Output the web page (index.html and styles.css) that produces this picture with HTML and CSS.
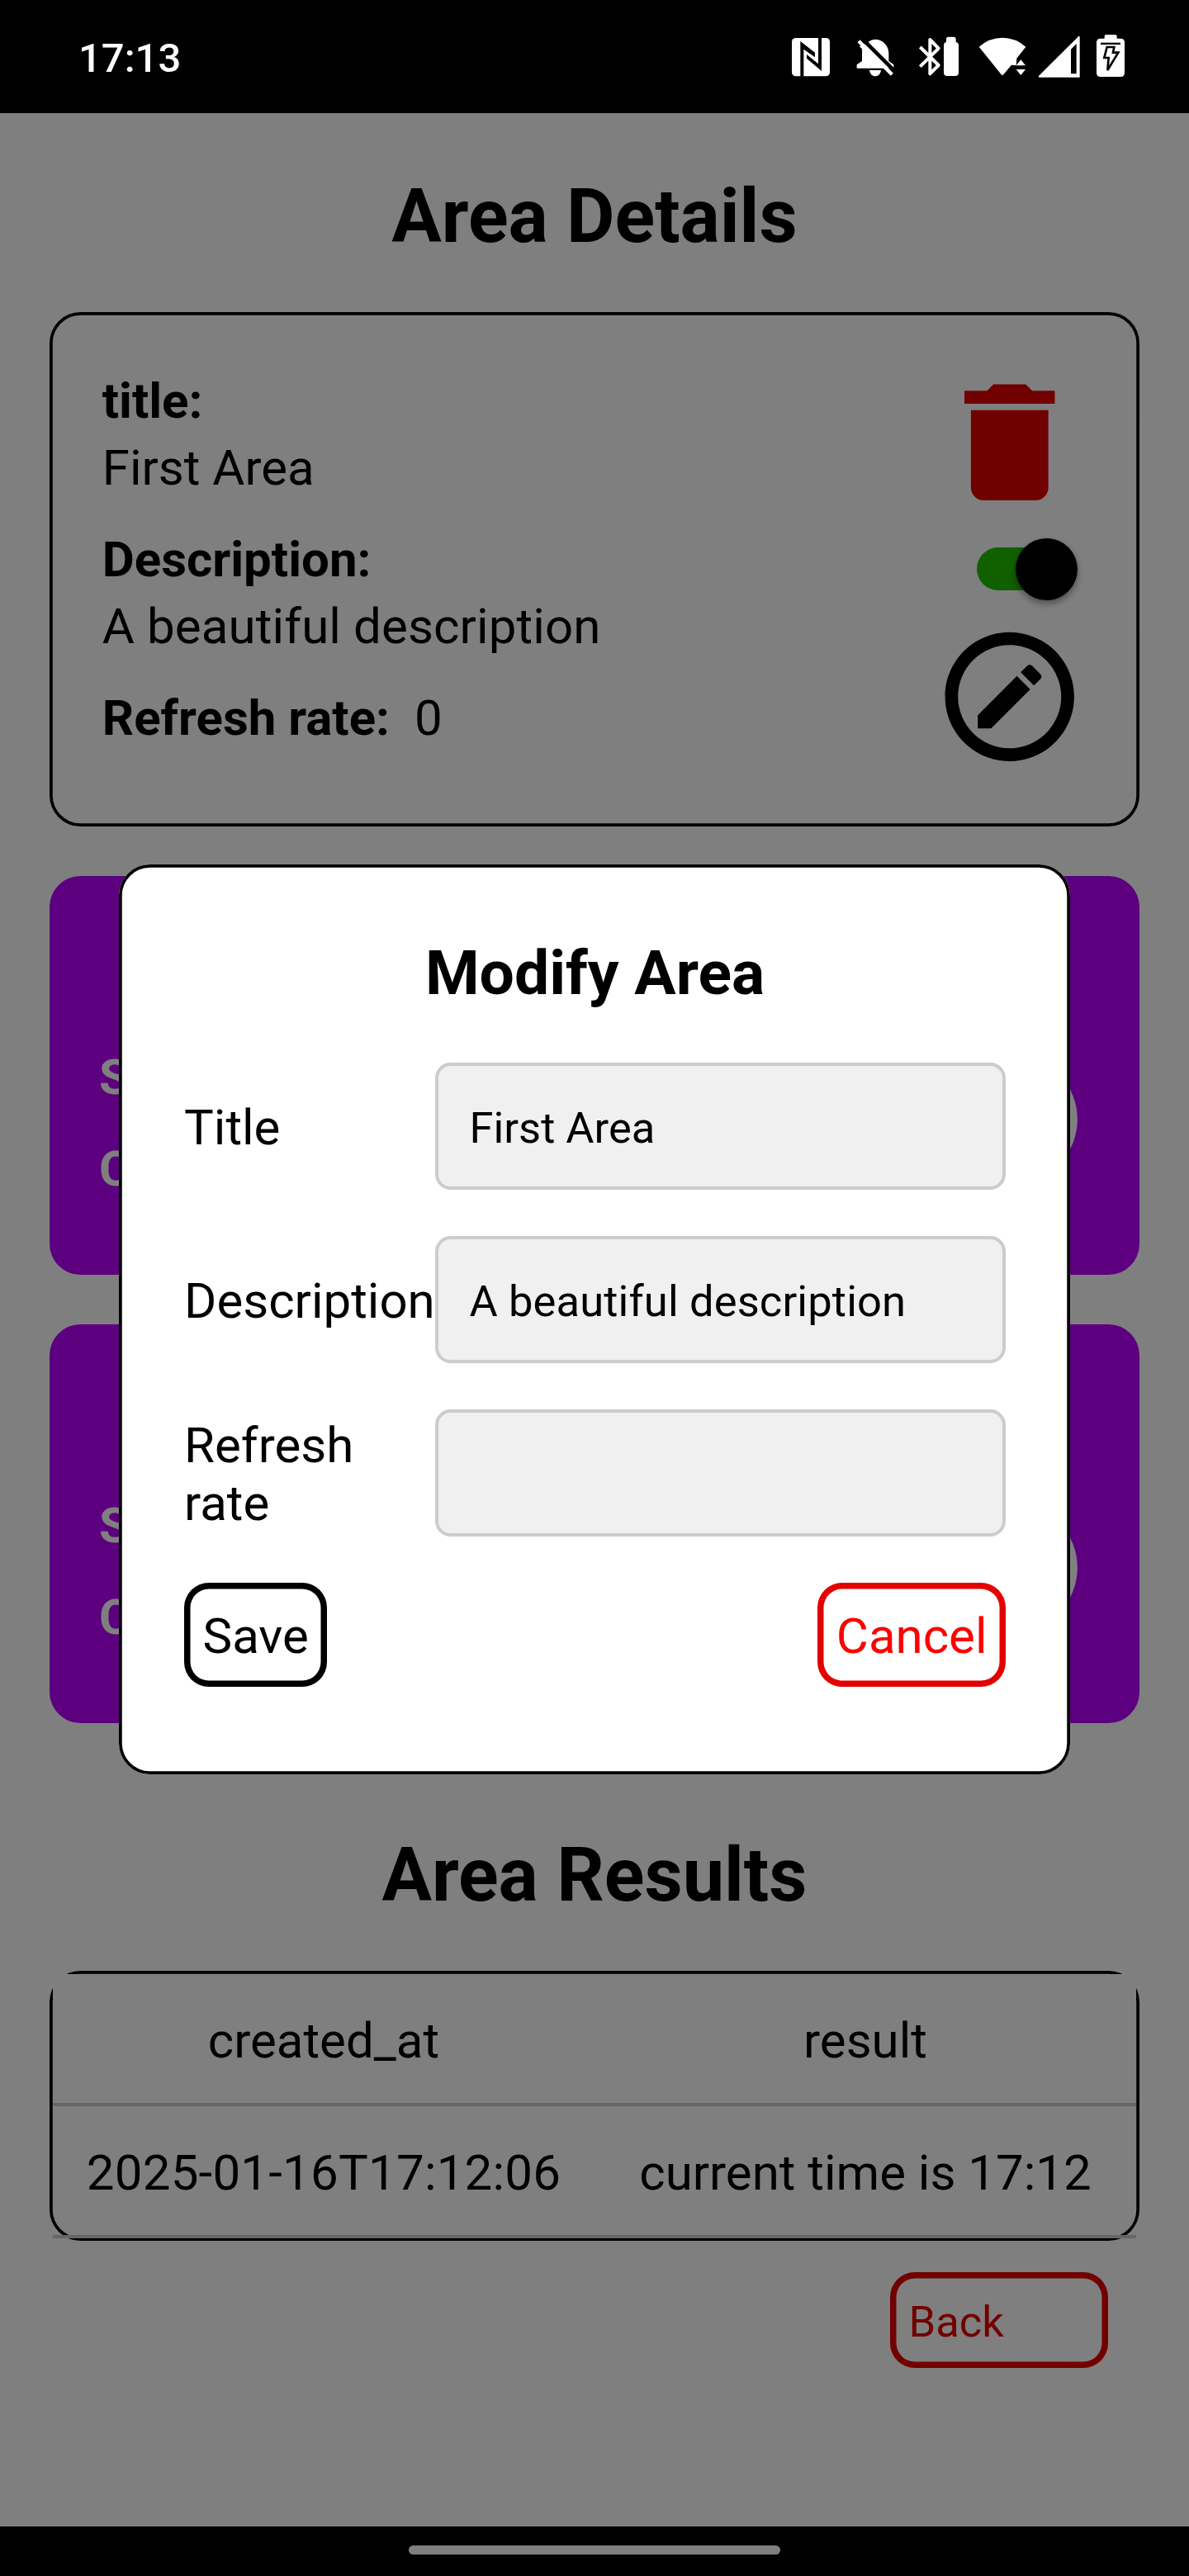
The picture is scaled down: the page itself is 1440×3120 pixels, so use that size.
FILE: index.html
```html
<!DOCTYPE html>
<html lang="en">
<head>
<meta charset="utf-8">
<title>Area Details</title>
<link rel="stylesheet" href="styles.css">
</head>
<body>
<div class="screen">
  <header class="status-bar">
    <span class="clock">17:13</span>
    <svg class="status-icons" viewBox="0 0 1440 300" fill="#fff">
      <!-- NFC -->
      <rect x="117" y="78" width="138" height="139" rx="14"/>
      <path d="M148 90L201 131V148L160 119V218H148ZM225 77V198L171 152V138L213 172V77Z" fill="#000"/>
      <!-- bell off -->
      <path d="M390 97C400 87 411 83 420 83C449 83 469 107 469 134V162L487 175V188H353V175L372 162V118L362 108Z"/>
      <path d="M399 195H441C439 209 431 217 420 217C409 217 401 209 399 195Z"/>
      <path d="M371 79L492 200" stroke="#000" stroke-width="14"/>
      <path d="M360 89L481 211" stroke="#fff" stroke-width="13"/>
      <!-- bluetooth with battery -->
      <path d="M583 111L650 177L619 208V84L650 116L583 182" fill="none" stroke="#fff" stroke-width="12" stroke-linejoin="round"/>
      <path d="M678 92V82Q678 74 686 74H705Q713 74 713 82V92Q723 95 723 104V204Q723 216 711 216H681Q669 216 669 204V104Q669 95 678 92Z"/>
      <!-- wifi -->
      <path d="M797 110Q835 77 882 77Q929 77 967 110L934 152L932 178L915 176L886 211Q882 216 878 211Z"/>
      <path d="M932 178L949 157L966 178ZM932 192H966L949 213Z"/>
      <!-- signal -->
      <path d="M1014 216L1158 73Q1163 69 1163 76V221H1018Q1012 221 1014 216Z"/>
      <path d="M1131 119L1151 99V208H1131Z" fill="#000"/>
      <!-- battery saver -->
      <path d="M1253 80V72Q1253 66 1259 66H1292Q1298 66 1298 72V80H1312Q1326 80 1326 94V205Q1326 219 1312 219H1238Q1224 219 1224 205V94Q1224 80 1238 80Z"/>
      <path d="M1239 95H1311V102H1239Z" fill="#000"/>
      <path d="M1262 111H1288L1284 131H1303L1264 195L1268 150H1252Z" fill="#fff" stroke="#000" stroke-width="8"/>
    </svg>
  </header>

  <main class="page">
    <h1 class="heading heading-details">Area Details</h1>
    <section class="details">
      <div class="details-text">
        <div class="field"><b>title:</b><span>First Area</span></div>
        <div class="field"><b>Description:</b><span class="description">A beautiful description</span></div>
        <div class="field field-inline"><b>Refresh rate:</b><span>0</span></div>
      </div>
      <div class="details-actions">
        <svg class="icon" viewBox="0 0 24 24" fill="#e30000"><path d="M6 19c0 1.1.9 2 2 2h8c1.1 0 2-.9 2-2V7H6v12zM19 4h-3.5l-1-1h-5l-1 1H5v2h14V4z"/></svg>
        <div class="switch"><div class="track"></div><div class="thumb"></div></div>
        <svg class="icon" viewBox="0 0 24 24"><path d="M12,2C6.47,2 2,6.47 2,12C2,17.53 6.47,22 12,22C17.53,22 22,17.53 22,12C22,6.47 17.53,2 12,2M12,4C16.41,4 20,7.59 20,12C20,16.41 16.41,20 12,20C7.59,20 4,16.41 4,12C4,7.59 7.59,4 12,4M15.1,7.07C15.24,7.07 15.38,7.12 15.5,7.23L16.77,8.5C17,8.72 17,9.07 16.77,9.28L15.77,10.28L13.72,8.23L14.72,7.23C14.82,7.12 14.96,7.07 15.1,7.07M13.13,8.81L15.19,10.87L9.13,16.93H7.07V14.87L13.13,8.81Z"/></svg>
      </div>
    </section>

    <section class="service">
      <div class="service-text"><span>S</span><span>C</span></div>
      <svg class="icon service-icon" viewBox="0 0 24 24"><circle cx="12" cy="12" r="9" fill="none" stroke="#fff" stroke-width="2"/></svg>
    </section>
    <section class="service">
      <div class="service-text"><span>S</span><span>C</span></div>
      <svg class="icon service-icon" viewBox="0 0 24 24"><circle cx="12" cy="12" r="9" fill="none" stroke="#fff" stroke-width="2"/></svg>
    </section>

    <h2 class="heading heading-results">Area Results</h2>
    <section class="results">
      <div class="row row-head"><span>created_at</span><span>result</span></div>
      <div class="row"><span class="timestamp">2025-01-16T17:12:06</span><span>current time is 17:12</span></div>
    </section>
    <div class="back">Back</div>
  </main>

  <footer class="nav-bar"><div class="pill"></div></footer>

  <div class="overlay">
    <div class="modal">
      <h2 class="modal-title">Modify Area</h2>
      <div class="form-row"><label>Title</label><div class="input">First Area</div></div>
      <div class="form-row"><label>Description</label><div class="input description">A beautiful description</div></div>
      <div class="form-row"><label>Refresh rate</label><div class="input"></div></div>
      <div class="buttons">
        <div class="button save">Save</div>
        <div class="button cancel">Cancel</div>
      </div>
    </div>
  </div>
</div>
</body>
</html>
```
FILE: styles.css
```css
* { box-sizing: border-box; }

body {
  margin: 0;
  font-family: Roboto, sans-serif;
  font-size: 60px;
  color: #000;
}

.screen {
  position: relative;
  display: flex;
  flex-direction: column;
  width: 1440px;
  height: 3120px;
  background: #fff;
  overflow: hidden;
}

.status-bar {
  display: flex;
  justify-content: space-between;
  height: 137px;
  padding: 0 40px 0 95px;
  background: #000;
}

.clock {
  font-size: 49px;
  font-weight: 500;
  line-height: 141px;
  color: #fff;
}

.status-icons {
  width: 480px;
  height: 100px;
  margin-top: 20px;
}

.page {
  flex: 1;
  display: flex;
  flex-direction: column;
  padding: 0 60px;
}

.heading {
  margin: 0;
  font-size: 90px;
  font-weight: 700;
  text-align: center;
}

.heading-details { padding-top: 10px; line-height: 231px; }
.heading-results { padding-top: 70px; line-height: 230px; }

.description { letter-spacing: 0.12px; }
.timestamp { letter-spacing: 0.22px; }

.details {
  display: flex;
  justify-content: space-between;
  height: 623px;
  padding: 63.5px 63.5px 0 63.75px;
  border-radius: 37.5px;
  box-shadow: inset 0 0 0 3.75px #000;
}

.details-text {
  display: flex;
  flex-direction: column;
  gap: 30px;
  padding-top: 3.5px;
  line-height: 81px;
}

.field { display: flex; flex-direction: column; }
.field-inline { flex-direction: row; gap: 30px; }

.details-actions {
  display: flex;
  flex-direction: column;
  gap: 23px;
}

.icon { display: block; width: 187.5px; height: 187.5px; }

.switch {
  display: flex;
  align-items: center;
  height: 75px;
  padding-left: 54px;
}

.track {
  width: 100px;
  height: 52px;
  margin: -1px -53px 0 0;
  border-radius: 26px;
  background: #20c000;
}

.thumb {
  width: 75px;
  height: 75px;
  border-radius: 50%;
  background: #000;
  box-shadow: 0 4px 8px rgba(0, 0, 0, 0.4);
}

.service {
  display: flex;
  justify-content: space-between;
  height: 483px;
  margin-top: 60px;
  padding: 188px 60px 0;
  border-radius: 37.5px;
  background: #b800ff;
}

.service-text {
  display: flex;
  flex-direction: column;
  font-weight: 700;
  line-height: 111px;
  color: #fff;
}

.service-icon { margin-top: 12.5px; }

.results {
  height: 327px;
  padding: 4px 4px 3px;
  border-radius: 37.5px;
  box-shadow: inset 0 0 0 3.75px #000;
}

.row {
  display: flex;
  height: 160px;
  border-bottom: 4px solid #ccc;
  line-height: 161px;
}

.row span { flex: 1; text-align: center; white-space: nowrap; }
.row-head { background: #fff; }

.back {
  width: 264px;
  height: 116px;
  margin: 38px 38px 0 auto;
  padding-left: 22.5px;
  border-radius: 30px;
  box-shadow: inset 0 0 0 7.5px #e60000;
  font-size: 52.5px;
  line-height: 120px;
  color: #e60000;
}

.nav-bar {
  display: flex;
  justify-content: center;
  height: 60px;
  padding-top: 23px;
  background: #000;
}

.pill {
  width: 450px;
  height: 11px;
  border-radius: 5.5px;
  background: #fff;
}

/* Dimming layer that holds the dialog */
.overlay {
  position: absolute;
  inset: 137px 0 0;
  display: flex;
  justify-content: center;
  padding: 910px 144px 0;
  background: rgba(0, 0, 0, 0.5);
}

.modal {
  width: 1152px;
  height: 1102px;
  padding: 78.75px 78px 0 79px;
  border-radius: 37.5px;
  background: #fff;
  box-shadow: inset 0 0 0 3.75px #000;
}

.modal-title {
  margin: 0 0 57.25px;
  font-size: 75px;
  line-height: 104px;
  text-align: center;
}

.form-row {
  display: flex;
  align-items: center;
  height: 154px;
  margin-bottom: 56px;
}

.form-row label {
  width: 304px;
  padding-top: 4px;
  line-height: 70.3px;
}

.input {
  flex: 1;
  height: 154px;
  padding-left: 37.5px;
  border: 4px solid #ccc;
  border-radius: 18.75px;
  background: #f0f0f0;
  font-size: 52.5px;
  line-height: 150px;
}

.buttons {
  display: flex;
  justify-content: space-between;
}

.button {
  height: 126px;
  padding: 0 22.5px;
  border-radius: 30px;
  line-height: 130px;
}

.save { box-shadow: inset 0 0 0 7.5px #000; }
.cancel { box-shadow: inset 0 0 0 7.5px #e30000; color: #f00; }
```
